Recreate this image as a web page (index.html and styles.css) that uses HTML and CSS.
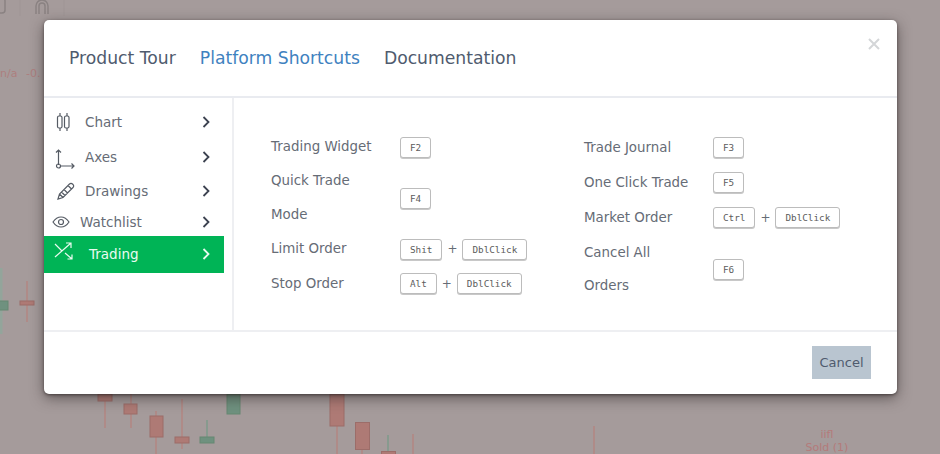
FILE: index.html
```html
<!DOCTYPE html>
<html lang="en">
<head>
<meta charset="utf-8">
<title>Platform Shortcuts</title>
<link rel="stylesheet" href="styles.css">
</head>
<body>
<svg class="chart" width="940" height="454" viewBox="0 0 940 454" aria-hidden="true">
  <g class="grid"><path d="M20 0V16M64 0V16"/></g>
  <g class="toolbar"><rect x="-6" y="-2" width="11" height="15" rx="3"/><path d="M36 14V6a6 6 0 0 1 12 0v8M39 14V6a3 3 0 0 1 6 0v8"/></g>
  <g class="red">
    <path class="wick" d="M27 281V322M105 394V428M131 394V428M156 411V454M182 399V449M337 426V454M362 450V454M413 434V454M594 426V454"/>
    <rect x="20" y="301" width="14" height="4"/><rect x="98" y="394" width="14" height="7"/>
    <rect x="124" y="404" width="13" height="10"/><rect x="150" y="416" width="13" height="21"/>
    <rect x="175" y="437" width="14" height="6"/><rect x="330" y="394" width="14" height="32"/>
    <rect x="355.500" y="422.500" width="14" height="27"/><rect x="381.500" y="451.500" width="14" height="6"/>
  </g>
  <g class="green">
    <path class="wick wick-pale" d="M1 268V334"/>
    <path class="wick" d="M207 420V437M388 435V451"/>
    <rect x="-6" y="301" width="14" height="9"/><rect x="200" y="437" width="14" height="6"/>
    <rect x="227" y="394" width="13" height="20"/>
  </g>
  <text class="legend" x="0" y="77">n/a</text><text class="legend" x="26" y="77">-0.</text>
  <text class="trade" x="827" y="438">iifl</text><text class="trade" x="827" y="451">Sold (1)</text>
</svg>
<main class="modal">
  <header class="tabs">
    <a class="tab">Product Tour</a>
    <a class="tab active">Platform Shortcuts</a>
    <a class="tab">Documentation</a>
    <button class="close" aria-label="Close"><svg width="12" height="12" viewBox="0 0 12 12"><path d="M1 1l10 10M11 1L1 11"/></svg></button>
  </header>
  <div class="content">
    <nav class="side">
      <a class="item item-chart"><svg class="ico" width="20" height="20" viewBox="0 0 20 20"><path d="M6 1v3M6 16v3M13 1v3M13 16v3"/><rect x="3.500" y="4" width="4.500" height="12" rx="1.500"/><rect x="10.500" y="4" width="4.500" height="12" rx="1.500"/></svg><span class="lbl">Chart</span><svg class="chev" width="8" height="12" viewBox="0 0 8 12"><path d="M1.500 1l5 5-5 5"/></svg></a>
      <a class="item item-axes"><svg class="ico" width="22" height="22" viewBox="0 0 22 22"><path d="M4.500 3v15M2 5.500L4.500 3 7 5.500M6.500 19H20M17.500 16.500L20 19l-2.500 2.500"/><circle cx="4.500" cy="19" r="2"/></svg><span class="lbl">Axes</span><svg class="chev" width="8" height="12" viewBox="0 0 8 12"><path d="M1.500 1l5 5-5 5"/></svg></a>
      <a class="item item-draw"><svg class="ico" width="20" height="20" viewBox="0 0 20 20"><path d="M2 18l1.500-5L13.500 3a2 2 0 0 1 3 0l.5.500a2 2 0 0 1 0 3L7 16.500zM3.500 13L7 16.500M12 4.500L15.500 8M5.500 11L9 14.500M8 8.500L11.500 12"/></svg><span class="lbl">Drawings</span><svg class="chev" width="8" height="12" viewBox="0 0 8 12"><path d="M1.500 1l5 5-5 5"/></svg></a>
      <a class="item item-watch"><svg class="ico" width="18" height="12" viewBox="0 0 18 12"><path d="M1 6c2-3 5-5 8-5s6 2 8 5c-2 3-5 5-8 5S3 9 1 6z"/><circle cx="9" cy="6" r="2.500"/></svg><span class="lbl">Watchlist</span><svg class="chev" width="8" height="12" viewBox="0 0 8 12"><path d="M1.500 1l5 5-5 5"/></svg></a>
      <a class="item item-trade"><svg class="ico" width="20" height="18" viewBox="0 0 20 18"><path d="M1 15L17 1M12 1h5v5M1 2l7 7M11 11l7 6M13.500 17H18v-4.500"/></svg><span class="lbl">Trading</span><svg class="chev" width="8" height="12" viewBox="0 0 8 12"><path d="M1.500 1l5 5-5 5"/></svg></a>
    </nav>
    <section class="shortcuts">
      <div class="col col-left">
        <div class="row"><span class="name">Trading Widget</span><span class="keys"><kbd class="key">F2</kbd></span></div>
        <div class="row"><span class="name">Quick Trade<br>Mode</span><span class="keys"><kbd class="key">F4</kbd></span></div>
        <div class="row"><span class="name">Limit Order</span><span class="keys"><kbd class="key">Shit</kbd><i class="plus">+</i><kbd class="key">DblClick</kbd></span></div>
        <div class="row"><span class="name">Stop Order</span><span class="keys"><kbd class="key">Alt</kbd><i class="plus">+</i><kbd class="key">DblClick</kbd></span></div>
      </div>
      <div class="col col-right">
        <div class="row"><span class="name">Trade Journal</span><span class="keys"><kbd class="key">F3</kbd></span></div>
        <div class="row"><span class="name">One Click Trade</span><span class="keys"><kbd class="key">F5</kbd></span></div>
        <div class="row"><span class="name">Market Order</span><span class="keys"><kbd class="key">Ctrl</kbd><i class="plus">+</i><kbd class="key">DblClick</kbd></span></div>
        <div class="row"><span class="name">Cancel All<br>Orders</span><span class="keys"><kbd class="key">F6</kbd></span></div>
      </div>
    </section>
  </div>
  <footer class="foot"><button class="cancel">Cancel</button></footer>
</main>
</body>
</html>
```
FILE: styles.css
```css
* { box-sizing: border-box; }
html, body { margin: 0; height: 454px; overflow: hidden; }
body { background: #a59b9b; font-family: "DejaVu Sans", sans-serif; position: relative; padding: 20px 43px 0 44px; }
.chart { position: absolute; left: 0; top: 0; }
.grid path { stroke: #9f9595; fill: none; }
.toolbar rect, .toolbar path { fill: none; stroke: #8a8282; stroke-width: 1.500; }
.red rect { fill: #ae7a75; stroke: #9c6d69; }
.green rect { fill: #6f917f; stroke: #668873; }
.red .wick { stroke: #b28683; fill: none; stroke-width: 1.500; }
.green .wick { stroke: #7d9a8a; fill: none; stroke-width: 1.500; }
.green .wick-pale { stroke: #93a59b; stroke-width: 3; }
.legend { fill: #ad7f7f; font-size: 11px; }
.trade { fill: #b47a7a; font-size: 11px; text-anchor: middle; }

.modal { position: relative; width: 853px; height: 374px; background: #fff; border-radius: 5px; box-shadow: 0 1px 3px rgba(40, 32, 32, .6), 0 4px 14px rgba(40, 32, 32, .55); display: flex; flex-direction: column; }
.tabs { height: 78px; flex: none; border-bottom: 2px solid #e9ebf0; display: flex; align-items: center; gap: 24px; padding: 0 25px; position: relative; }
.tab { font-size: 17.200px; color: #4f5b6e; }
.tab.active { color: #3f82bf; }
.close { position: absolute; top: 18px; right: 17px; background: none; border: 0; padding: 0; line-height: 0; }
.close path { stroke: #d4d6d8; stroke-width: 2; fill: none; }

.content { flex: 1; display: flex; border-bottom: 2px solid #eeeff2; min-height: 0; }
.side { width: 188px; flex: none; border-right: 2px solid #eeeff2; padding-top: 7px; box-sizing: content-box; }
.item { display: flex; align-items: center; width: 180px; color: #666c76; font-size: 13.500px; position: relative; }
.ico { fill: none; stroke: #555b64; stroke-width: 1.200; flex: none; }
.lbl { flex: 1; }
.chev { fill: none; stroke: #3c4250; stroke-width: 1.800; flex: none; margin-right: 14px; }
.item-chart, .item-axes, .item-draw { height: 34.500px; padding-left: 10px; }
.item-chart .ico { margin-right: 11px; }
.item-axes .ico { margin: 2px 9px 0 0; }
.item-draw .ico { margin: 0 9px 0 2px; }
.item-watch { height: 27px; padding-left: 8px; }
.item-watch .ico { margin-right: 10px; }
.item-trade { height: 37px; padding-left: 10px; background: #00b456; color: #e9fbf0; }
.item-trade .ico { stroke: #e9fbf0; margin: -7px 15px 0 0; }
.item-trade .chev { stroke: #e9fbf0; }

.shortcuts { flex: 1; display: flex; padding: 32px 0 0 37px; }
.col { width: 313px; flex: none; }
.row { display: flex; align-items: center; }
.name { width: 129px; flex: none; font-size: 13.400px; line-height: 34px; color: #666c76; }
.col-left .row { min-height: 34.300px; }
.col-right .row { min-height: 35.200px; }
.col-right .row:last-child .name { line-height: 33.500px; }
.keys { display: flex; align-items: center; gap: 5px; }
.key { display: block; height: 21px; padding: 0 9px; font: 9.300px/19px "DejaVu Sans Mono", monospace; color: #5c5c5c; background: #fff; border: 1px solid #bcbcbc; border-radius: 3px; box-shadow: 0 1px 0 #c8c8c8; }
.plus { font-style: normal; font-size: 12px; color: #666c76; }

.foot { height: 62px; flex: none; display: flex; justify-content: flex-end; align-items: flex-start; padding: 14px 26px 0 0; }
.cancel { width: 59px; height: 33px; background: #b9c5d0; border: 0; color: #4f5b6e; font: 13px "DejaVu Sans", sans-serif; padding: 0; }
```
